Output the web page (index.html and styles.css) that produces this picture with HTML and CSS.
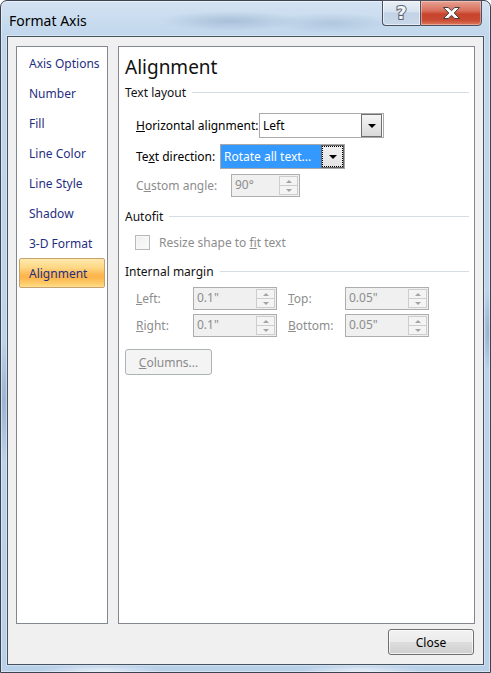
FILE: index.html
```html
<!DOCTYPE html>
<html>
<head>
<meta charset="utf-8">
<title>Format Axis</title>
<link rel="stylesheet" href="styles.css">
</head>
<body>
<div class="window">
  <div class="titlebar">
    <span class="title">Format Axis</span>
    <div class="caption">
      <div class="cap-btn cap-help"><span class="q">?</span></div>
      <div class="cap-btn cap-close">
        <svg width="19" height="14" viewBox="0 0 19 14"><polygon points="1.5,1.5 6.2,1.5 9.5,4.6 12.8,1.5 17.5,1.5 12.2,7 17.5,12.5 12.8,12.5 9.5,9.4 6.2,12.5 1.5,12.5 6.8,7" fill="#ffffff" stroke="#404040" stroke-width="1" stroke-linejoin="round"/></svg>
      </div>
    </div>
  </div>
  <div class="client">
    <div class="main">
      <ul class="nav">
        <li class="nav-item">Axis Options</li>
        <li class="nav-item">Number</li>
        <li class="nav-item">Fill</li>
        <li class="nav-item">Line Color</li>
        <li class="nav-item">Line Style</li>
        <li class="nav-item">Shadow</li>
        <li class="nav-item">3-D Format</li>
        <li class="nav-item sel">Alignment</li>
      </ul>
      <div class="panel">
        <h1 class="heading">Alignment</h1>

        <div class="sec sec-text"><span>Text layout</span><i class="rule"></i></div>

        <div class="row row-horiz">
          <label class="lbl lbl-horiz"><u>H</u>orizontal alignment:</label>
          <div class="combo">
            <span class="combo-val">Left</span>
            <span class="drop"><b class="tri"></b></span>
          </div>
        </div>

        <div class="row row-dir">
          <label class="lbl lbl-dir">Te<u>x</u>t direction:</label>
          <div class="combo combo-focus">
            <span class="combo-val">Rotate all text...</span>
            <span class="drop"><b class="tri"></b></span>
          </div>
        </div>

        <div class="row row-angle">
          <label class="lbl lbl-angle dis">C<u>u</u>stom angle:</label>
          <div class="spin spin-angle">
            <span class="spin-val">90°</span>
            <span class="arrows"><span class="arr"><b class="t-up"></b></span><span class="arr"><b class="t-dn"></b></span></span>
          </div>
        </div>

        <div class="sec sec-autofit"><span>Autofit</span><i class="rule"></i></div>

        <div class="check-row">
          <span class="checkbox"></span>
          <span class="dis">Resize shape to <u>f</u>it text</span>
        </div>

        <div class="sec sec-margin"><span>Internal margin</span><i class="rule"></i></div>

        <div class="margins">
          <label class="lbl dis"><u>L</u>eft:</label>
          <div class="spin spin-m">
            <span class="spin-val">0.1"</span>
            <span class="arrows"><span class="arr"><b class="t-up"></b></span><span class="arr"><b class="t-dn"></b></span></span>
          </div>
          <label class="lbl dis"><u>T</u>op:</label>
          <div class="spin spin-m">
            <span class="spin-val">0.05"</span>
            <span class="arrows"><span class="arr"><b class="t-up"></b></span><span class="arr"><b class="t-dn"></b></span></span>
          </div>
          <label class="lbl dis"><u>R</u>ight:</label>
          <div class="spin spin-m">
            <span class="spin-val">0.1"</span>
            <span class="arrows"><span class="arr"><b class="t-up"></b></span><span class="arr"><b class="t-dn"></b></span></span>
          </div>
          <label class="lbl dis"><u>B</u>ottom:</label>
          <div class="spin spin-m">
            <span class="spin-val">0.05"</span>
            <span class="arrows"><span class="arr"><b class="t-up"></b></span><span class="arr"><b class="t-dn"></b></span></span>
          </div>
        </div>

        <button class="btn btn-columns" disabled><u>C</u>olumns...</button>
      </div>
    </div>
    <div class="footer">
      <button class="btn btn-close">Close</button>
    </div>
  </div>
</div>
</body>
</html>
```

FILE: styles.css
```css
html, body {
  margin: 0;
  padding: 0;
  background: #ffffff;
}
body {
  font-family: "Noto Sans", "Open Sans", sans-serif;
  font-size: 12px;
  color: #000;
}

/* ---------- window frame ---------- */
.window {
  width: 491px;
  height: 673px;
  box-sizing: border-box;
  border: 1px solid #3b4250;
  border-radius: 7px 7px 0 0;
  padding: 0 6px 7px 6px;
  display: flex;
  flex-direction: column;
  background:
    radial-gradient(ellipse 70px 10px at 230px 20px, rgba(110, 140, 175, 0.35), transparent),
    radial-gradient(ellipse 60px 10px at 330px 22px, rgba(110, 140, 175, 0.25), transparent),
    radial-gradient(ellipse 8px 60px at 3px 400px, rgba(90, 120, 160, 0.35), transparent),
    radial-gradient(ellipse 5px 40px at 487px 330px, rgba(90, 120, 160, 0.4), transparent),
    radial-gradient(ellipse 60px 5px at 100px 669px, rgba(255, 255, 255, 0.6), transparent),
    radial-gradient(ellipse 60px 5px at 360px 669px, rgba(255, 255, 255, 0.6), transparent),
    linear-gradient(180deg, #d3e2f2 0px, #c0d6ec 36px, #b9d0e9 100%);
  box-shadow: inset 0 0 0 1px rgba(255, 255, 255, 0.45);
}

.titlebar {
  height: 35px;
  flex: none;
  display: flex;
  align-items: flex-start;
  padding-left: 2px;
}
.title {
  margin-top: 10px;
  font-size: 14px;
  line-height: 19px;
  color: #000;
}
.caption {
  margin-left: auto;
  margin-right: 2px;
  margin-top: -1px;
  display: flex;
}
.cap-btn {
  height: 26px;
  box-sizing: border-box;
  border: 1px solid #4a5262;
  display: flex;
  align-items: center;
  justify-content: center;
}
.cap-help {
  width: 38px;
  border-right: none;
  border-radius: 0 0 0 4px;
  background: linear-gradient(180deg, #e9eff6 0%, #d7e2ef 45%, #c3d2e5 50%, #c8d8eb 100%);
  box-shadow: inset 0 0 0 1px rgba(255, 255, 255, 0.55);
}
.q {
  font-family: "DejaVu Sans", sans-serif;
  font-weight: bold;
  font-size: 18px;
  line-height: 20px;
  color: #f3f5f8;
  -webkit-text-stroke: 2px #5a6472;
  paint-order: stroke fill;
}
.cap-close {
  width: 62px;
  border-radius: 0 0 4px 0;
  background: linear-gradient(180deg, #e6a393 0%, #d9705e 40%, #c8432c 55%, #c94a33 80%, #dd7a5e 100%);
  box-shadow: inset 0 0 0 1px rgba(255, 220, 210, 0.45);
}
.cap-close svg {
  display: block;
  margin-top: -1px;
}

/* ---------- client ---------- */
.client {
  flex: 1;
  border: 1px solid #47525f;
  background: #f0f0f0;
  padding: 9px 8px 9px 8px;
  display: flex;
  flex-direction: column;
  box-shadow: 0 0 0 1px rgba(255, 255, 255, 0.35);
}
.main {
  display: flex;
  gap: 10px;
  height: 578px;
}

/* nav list */
.nav {
  list-style: none;
  margin: 0;
  width: 92px;
  box-sizing: border-box;
  border: 1px solid #828790;
  background: #fff;
  padding: 1px 2px 0 2px;
}
.nav-item {
  height: 30px;
  box-sizing: border-box;
  display: flex;
  align-items: center;
  padding-left: 10px;
  color: #1f2f80;
  white-space: nowrap;
}
.nav-item.sel {
  border: 1px solid #c8a26e;
  border-radius: 2px;
  padding-left: 9px;
  background: linear-gradient(180deg, #fee9ae 0%, #fed886 30%, #fdb954 55%, #fdb44a 65%, #fdd06f 90%, #fee090 100%);
}

/* right panel */
.panel {
  flex: 1;
  box-sizing: border-box;
  border: 1px solid #828790;
  background: #fff;
  padding: 7px 5px 0 6px;
  display: flex;
  flex-direction: column;
  align-items: flex-start;
}
.heading {
  margin: 0;
  font-size: 19px;
  font-weight: normal;
  line-height: 26px;
  color: #111;
}
.sec {
  align-self: stretch;
  height: 16px;
  display: flex;
  align-items: center;
  color: #111;
}
.sec .rule {
  flex: 1;
  height: 1px;
  margin-left: 6px;
  background: #d4dde6;
}
.sec-text { margin-top: 4px; }
.sec-autofit { margin-top: 11px; }
.sec-margin { margin-top: 13px; }

.row {
  display: flex;
  align-items: center;
  margin-left: 11px;
}
.row-horiz { margin-top: 13px; }
.row-dir { margin-top: 6px; }
.row-angle { margin-top: 5px; }

.lbl { white-space: nowrap; }
.lbl-horiz { width: 123px; }
.lbl-dir { width: 84px; }
.lbl-angle { width: 95px; }
.dis { color: #8d8d8d; }

/* combo */
.combo {
  width: 125px;
  height: 25px;
  box-sizing: border-box;
  border: 1px solid #a9a9a9;
  background: #fff;
  display: flex;
}
.combo-val {
  flex: 1;
  display: flex;
  align-items: center;
  padding-left: 3px;
  white-space: nowrap;
  overflow: hidden;
}
.drop {
  width: 21px;
  box-sizing: border-box;
  margin-right: 1px;
  border: 1px solid #6f6f6f;
  background: linear-gradient(180deg, #f4f4f4 0%, #e8e8e8 50%, #d9d9d9 100%);
  display: flex;
  align-items: center;
  justify-content: center;
}
.tri {
  width: 0;
  height: 0;
  border-left: 4px solid transparent;
  border-right: 4px solid transparent;
  border-top: 4px solid #000;
  margin-top: 1px;
}
.combo-focus .combo-val {
  background: #3399ff;
  color: #fff;
}
.combo-focus .drop {
  width: 23px;
  margin-right: 0;
  border: 1px solid #646464;
  outline: 1px dotted #000;
  outline-offset: -2px;
  background: linear-gradient(180deg, #f0f0f0 0%, #e4e4e4 100%);
}

/* spinners */
.spin {
  height: 23px;
  box-sizing: border-box;
  border: 1px solid #adadad;
  background: #f0f0f0;
  display: flex;
  align-items: stretch;
}
.spin-angle { width: 69px; }
.spin-m { width: 84px; }
.spin-val {
  flex: 1;
  color: #8d8d8d;
  padding-left: 3px;
  line-height: 19px;
}
.arrows {
  width: 19px;
  margin: 1px 1px 1px 0;
  display: flex;
  flex-direction: column;
}
.arr {
  flex: 1;
  box-sizing: border-box;
  border: 1px solid #cdcdcd;
  background: #f4f4f4;
  display: flex;
  align-items: center;
  justify-content: center;
}
.arr + .arr { border-top: none; }
.t-up, .t-dn {
  width: 0;
  height: 0;
  border-left: 3px solid transparent;
  border-right: 3px solid transparent;
}
.t-up { border-bottom: 3px solid #a3a3a3; }
.t-dn { border-top: 3px solid #a3a3a3; }

/* checkbox */
.check-row {
  margin-top: 10px;
  margin-left: 10px;
  height: 16px;
  display: flex;
  align-items: center;
}
.checkbox {
  width: 15px;
  height: 15px;
  box-sizing: border-box;
  border: 1px solid #b9b9b9;
  background: linear-gradient(135deg, #efefef, #fbfbfb);
  box-shadow: inset 0 0 0 1px #f7f7f7;
  margin-right: 9px;
  margin-top: 1px;
}

/* margins grid */
.margins {
  margin-top: 8px;
  margin-left: 11px;
  display: grid;
  grid-template-columns: 57px 95px 57px 84px;
  grid-auto-rows: 23px;
  row-gap: 4px;
  align-items: center;
}
.margins .lbl { align-self: center; }

/* buttons */
.btn {
  font-family: "Noto Sans", "Open Sans", sans-serif;
  font-size: 12px;
  padding: 0;
  margin: 0;
  box-sizing: border-box;
  border-radius: 3px;
}
.btn-columns {
  margin-top: 12px;
  width: 87px;
  height: 26px;
  border: 1px solid #adb2b5;
  background: #f4f4f4;
  color: #8a8a8a;
}
.footer {
  margin-top: 5px;
  display: flex;
  justify-content: flex-end;
}
.btn-close {
  width: 86px;
  height: 26px;
  margin-right: 1px;
  border: 1px solid #707070;
  color: #000;
  background: linear-gradient(180deg, #f2f2f2 0%, #ebebeb 48%, #dddddd 52%, #cfcfcf 100%);
  box-shadow: inset 0 0 0 1px rgba(255, 255, 255, 0.7);
}
```
